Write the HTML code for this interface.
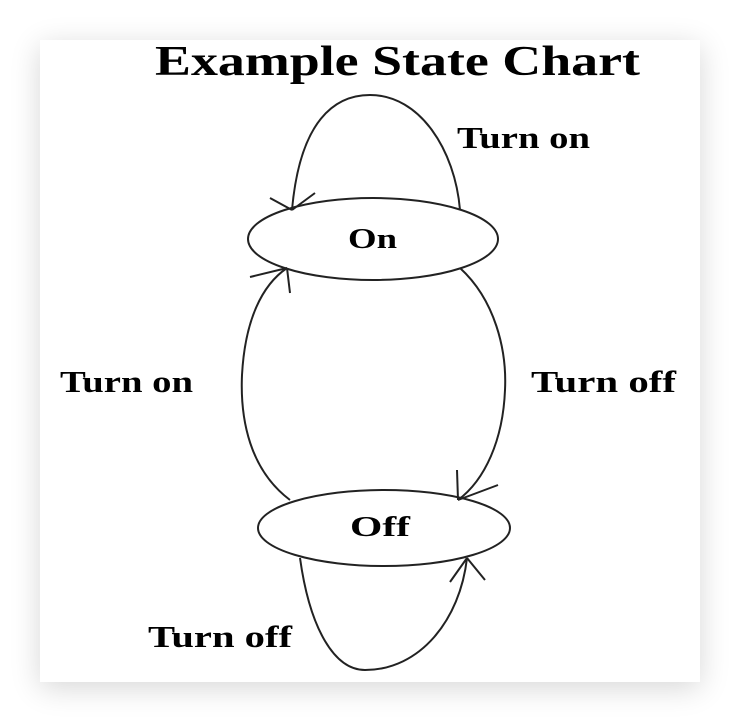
<!DOCTYPE html>
<html><head><style>
html,body{margin:0;padding:0;background:#fff;width:740px;height:722px;overflow:hidden}
.card{position:absolute;left:40px;top:40px;width:660px;height:642px;background:#fff;box-shadow:0 6px 28px rgba(0,0,0,0.16)}
svg{position:absolute;left:0;top:0}
text{font-family:"Liberation Serif",serif;font-weight:bold;fill:#000}
</style></head><body>
<div class="card"></div>
<svg width="740" height="722" viewBox="0 0 740 722">
<g fill="none" stroke="#222" stroke-width="2">
<ellipse cx="373" cy="239" rx="125" ry="41"/>
<ellipse cx="384" cy="528" rx="126" ry="38"/>
<path d="M292 210 C300 120 335 95 370 95 C420 95 455 150 460 210"/>
<path d="M292 210 L270 198 M292 210 L315 193"/>
<path d="M290 500 C250 470 240 420 242 375 C245 320 262 285 287 268"/>
<path d="M287 268 L250 277 M287 268 L290 293"/>
<path d="M460 268 C495 300 507 350 505 390 C503 440 485 480 458 500"/>
<path d="M458 500 L457 470 M458 500 L498 485"/>
<path d="M300 558 C310 630 335 670 365 670 C420 670 460 620 467 558"/>
<path d="M467 558 L450 582 M467 558 L485 580"/>
</g>
<text x="155" y="75" font-size="42" textLength="485" lengthAdjust="spacingAndGlyphs">Example State Chart</text>
<text x="348" y="248" font-size="28" textLength="49" lengthAdjust="spacingAndGlyphs">On</text>
<text x="350" y="536" font-size="28" textLength="60" lengthAdjust="spacingAndGlyphs">Off</text>
<text x="457" y="148" font-size="31" textLength="133" lengthAdjust="spacingAndGlyphs">Turn on</text>
<text x="60" y="392" font-size="31" textLength="133" lengthAdjust="spacingAndGlyphs">Turn on</text>
<text x="531" y="392" font-size="31" textLength="145" lengthAdjust="spacingAndGlyphs">Turn off</text>
<text x="148" y="647" font-size="31" textLength="144" lengthAdjust="spacingAndGlyphs">Turn off</text>
</svg>
</body></html>
